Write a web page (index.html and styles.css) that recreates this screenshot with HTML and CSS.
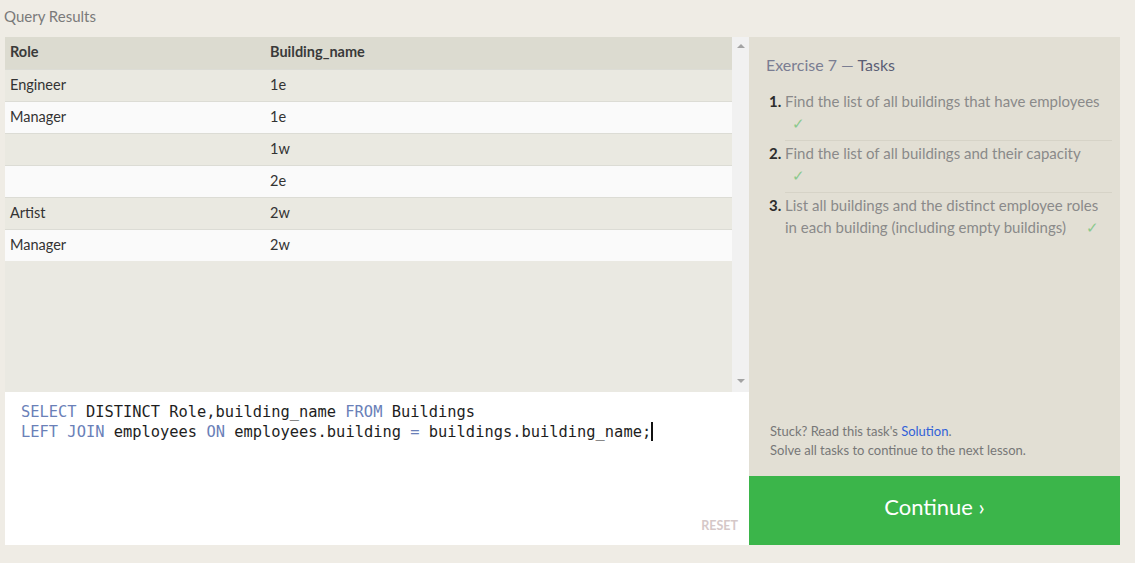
FILE: index.html
```html
<!DOCTYPE html>
<html>
<head>
<meta charset="utf-8">
<link rel="stylesheet" href="styles.css">
</head>
<body>
<div class="title">Query Results</div>
<div class="workspace">
  <div class="left">
    <div class="results">
      <div class="table-wrap">
        <table class="grid">
          <thead>
            <tr><th class="c1">Role</th><th>Building_name</th></tr>
          </thead>
          <tbody>
            <tr><td>Engineer</td><td>1e</td></tr>
            <tr><td>Manager</td><td>1e</td></tr>
            <tr><td></td><td>1w</td></tr>
            <tr><td></td><td>2e</td></tr>
            <tr><td>Artist</td><td>2w</td></tr>
            <tr><td>Manager</td><td>2w</td></tr>
          </tbody>
        </table>
      </div>
      <div class="scrollbar">
        <span class="arrow up"></span>
        <span class="arrow down"></span>
      </div>
    </div>
    <div class="editor">
      <pre class="code"><span class="kw">SELECT</span> DISTINCT Role,building_name <span class="kw">FROM</span> Buildings
<span class="kw">LEFT</span> <span class="kw">JOIN</span> employees <span class="kw">ON</span> employees.building <span class="kw">=</span> buildings.building_name;<span class="caret"></span></pre>
      <div class="reset">RESET</div>
    </div>
  </div>
  <div class="right">
    <div class="tasks">
      <h2 class="tasks-title">Exercise 7 — <span class="strong">Tasks</span></h2>
      <ol class="task-list">
        <li><span>Find the list of all buildings that have employees</span><br><span class="check">✓</span></li>
        <li><span>Find the list of all buildings and their capacity</span><br><span class="check">✓</span></li>
        <li><span>List all buildings and the distinct employee roles</span><br><span>in each building (including empty buildings)</span><span class="check gap">✓</span></li>
      </ol>
      <div class="hint">
        <div>Stuck? Read this task's <a class="link">Solution</a>.</div>
        <div>Solve all tasks to continue to the next lesson.</div>
      </div>
    </div>
    <div class="continue">Continue ›</div>
  </div>
</div>
</body>
</html>
```

FILE: styles.css
```css
html, body {
  margin: 0;
  padding: 0;
}
body {
  background: #efece5;
  font-family: Lato, "Open Sans", sans-serif;
  width: 1135px;
  height: 563px;
  overflow: hidden;
}
.title {
  height: 37px;
  line-height: 32px;
  padding-left: 4px;
  font-size: 15px;
  color: #7a7a7a;
}
.workspace {
  display: flex;
  margin-left: 5px;
  width: 1115px;
  height: 508px;
}
.left {
  width: 744px;
  display: flex;
  flex-direction: column;
}
.results {
  height: 355px;
  display: flex;
  background: #eae9e2;
}
.table-wrap {
  flex: 1;
}
.grid {
  width: 100%;
  border-collapse: collapse;
  font-size: 14.5px;
  color: #333;
}
.grid th {
  background: #dcdbd0;
  text-align: left;
  font-weight: bold;
  height: 32px;
  padding: 0 5px 3px;
  box-sizing: border-box;
  color: #3a3a3a;
}
.grid th.c1, .grid td:first-child {
  width: 250px;
}
.grid td {
  height: 30px;
  line-height: 18px;
  padding: 0 5px 1px;
  border-top: 1px solid #dcdcd5;
}
.grid tbody tr:nth-child(odd) td {
  background: #eae9e1;
}
.grid tbody tr:nth-child(even) td {
  background: #fafafa;
}
.scrollbar {
  width: 17px;
  background: #f1f1f1;
  display: flex;
  flex-direction: column;
  justify-content: space-between;
  align-items: center;
  padding: 7px 0 9px;
  box-sizing: border-box;
}
.arrow {
  width: 0;
  height: 0;
  border-left: 4px solid transparent;
  border-right: 4px solid transparent;
}
.arrow.up {
  border-bottom: 4px solid #a3a3a3;
}
.arrow.down {
  border-top: 4px solid #a3a3a3;
}
.editor {
  flex: 1;
  background: #fff;
  display: flex;
  flex-direction: column;
  justify-content: space-between;
  padding: 10px 11px 12px 16px;
}
.code {
  margin: 0;
  font-family: "DejaVu Sans Mono", "Liberation Mono", monospace;
  font-size: 15.4px;
  line-height: 20px;
  color: #1e1e1e;
}
.kw {
  color: #6a80b8;
}
.caret {
  display: inline-block;
  width: 2px;
  height: 19px;
  background: #111;
  vertical-align: -4px;
}
.reset {
  align-self: flex-end;
  font-size: 12.5px;
  font-weight: bold;
  color: #d5c8c8;
}
.right {
  width: 371px;
  display: flex;
  flex-direction: column;
}
.tasks {
  flex: 1;
  background: #e2dfd4;
  padding: 17px 8px 16px 17px;
  display: flex;
  flex-direction: column;
}
.tasks-title {
  margin: 0 0 14px;
  font-size: 16px;
  font-weight: normal;
  color: #7a7d92;
  line-height: 22px;
}
.tasks-title .strong {
  color: #5b5e74;
}
.task-list {
  margin: 0;
  padding-left: 19px;
  font-size: 15px;
  line-height: 22px;
  color: #8a8a8a;
  flex: 1;
}
.task-list li {
  padding: 1px 0 6px;
  border-bottom: 1px solid #d6d3c7;
}
.task-list li:first-child {
  padding-top: 0;
}
.task-list li:last-child {
  border-bottom: none;
}
.task-list li::marker {
  color: #2c2c2c;
  font-weight: bold;
}
.check {
  color: #8ac98d;
  display: inline-block;
  margin-left: 7px;
}
.check.gap {
  margin-left: 20px;
}
.hint {
  font-size: 13px;
  line-height: 19px;
  color: #777;
  padding-left: 4px;
}
.link {
  color: #3161d8;
}
.continue {
  height: 69px;
  background: #3bb54a;
  color: #fff;
  font-size: 22px;
  text-align: center;
  line-height: 62px;
}
```
